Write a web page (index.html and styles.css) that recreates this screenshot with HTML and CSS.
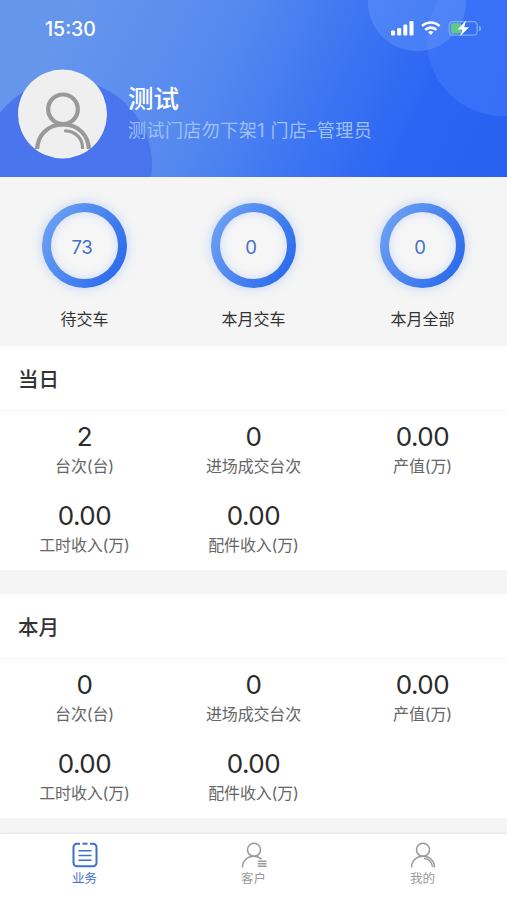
FILE: index.html
```html
<!DOCTYPE html>
<html lang="zh-CN">
<head>
    <meta charset="UTF-8">
    <meta name="viewport" content="width=device-width, initial-scale=1.0">
    <title>业务</title>
    <link rel="stylesheet" href="styles.css">
</head>
<body>

    <!-- 头部 -->
    <header class="header">
        <div class="status-bar">
            <span class="time">15:30</span>
            <svg class="status-icons" width="92" height="18" viewBox="0 0 92 18">
                <g fill="#fff">
                    <rect x="1" y="11.5" width="4" height="5" rx="1.2"/>
                    <rect x="7.2" y="9" width="4" height="7.5" rx="1.2"/>
                    <rect x="13.3" y="5.5" width="4" height="11" rx="1.2"/>
                    <rect x="19.5" y="2" width="4" height="14.5" rx="1.2"/>
                    <path d="M38.2 13a4.5 4.5 0 0 1 5.2 0L40.8 16z"/>
                </g>
                <g fill="none" stroke="#fff" stroke-width="2.6">
                    <path d="M32.1 7a12.6 12.6 0 0 1 17.4 0"/>
                    <path d="M35.2 10.9a8 8 0 0 1 11.2 0"/>
                </g>
                <rect x="59.2" y="2.6" width="28" height="13.6" rx="3.6" fill="none" stroke="#7fabf5" stroke-width="1.3"/>
                <path d="M89 6.5v6c2.8-1 2.8-5 0-6z" fill="#7fabf5"/>
                <rect x="61" y="4.3" width="10.5" height="10.2" rx="1.8" fill="#62c78b"/>
                <path d="M76 1.5l-8.3 9.1h4.8L70 17.2l9.1-9h-4.9z" fill="#fff"/>
            </svg>
        </div>
        <div class="user">
            <svg class="avatar" width="90" height="90" viewBox="0 0 90 90">
                <defs>
                    <clipPath id="avatar-clip"><path d="M0 0h90v80H0z"/></clipPath>
                </defs>
                <circle cx="45.5" cy="45" r="44.5" fill="#efefef"/>
                <g fill="none" stroke="#999" stroke-width="4.2" clip-path="url(#avatar-clip)">
                    <circle cx="46" cy="40.3" r="14.8"/>
                    <path d="M20 82c0-15 10-26.5 26-26.5S72 67 72 82"/>
                    <path d="M48.5 61.8c10 .3 17 7.5 17 17" stroke-width="3.2" stroke-linecap="round"/>
                </g>
            </svg>
            <div class="user-info">
                <h1>测试</h1>
                <p>测试门店勿下架1 门店–管理员</p>
            </div>
        </div>
    </header>

    <!-- 交车统计 -->
    <section class="summary">
        <div class="summary-item">
            <div class="ring"><span>73</span></div>
            <p>待交车</p>
        </div>
        <div class="summary-item">
            <div class="ring"><span>0</span></div>
            <p>本月交车</p>
        </div>
        <div class="summary-item">
            <div class="ring"><span>0</span></div>
            <p>本月全部</p>
        </div>
    </section>

    <!-- 当日 -->
    <section class="card">
        <h2>当日</h2>
        <div class="stats">
            <div class="stat"><strong>2</strong><span>台次(台)</span></div>
            <div class="stat"><strong>0</strong><span>进场成交台次</span></div>
            <div class="stat"><strong>0.00</strong><span>产值(万)</span></div>
            <div class="stat"><strong>0.00</strong><span>工时收入(万)</span></div>
            <div class="stat"><strong>0.00</strong><span>配件收入(万)</span></div>
        </div>
    </section>

    <!-- 本月 -->
    <section class="card">
        <h2>本月</h2>
        <div class="stats">
            <div class="stat"><strong>0</strong><span>台次(台)</span></div>
            <div class="stat"><strong>0</strong><span>进场成交台次</span></div>
            <div class="stat"><strong>0.00</strong><span>产值(万)</span></div>
            <div class="stat"><strong>0.00</strong><span>工时收入(万)</span></div>
            <div class="stat"><strong>0.00</strong><span>配件收入(万)</span></div>
        </div>
    </section>

    <!-- 底部导航 -->
    <nav class="tabbar">
        <a class="tab active">
            <svg width="28" height="28" viewBox="0 0 28 28" fill="none" stroke="currentColor" stroke-width="2">
                <path d="M9 2.7H6A3.5 3.5 0 0 0 2.5 6.2v15.6A3.5 3.5 0 0 0 6 25.3h16a3.5 3.5 0 0 0 3.5-3.5V6.2A3.5 3.5 0 0 0 22 2.7h-3"/>
                <path d="M11.5 2.7h5"/>
                <path d="M7.5 9.7h13M7.5 14.5h13M7.5 19.3h13" stroke-width="1.5"/>
            </svg>
            <span>业务</span>
        </a>
        <a class="tab">
            <svg width="28" height="28" viewBox="0 0 28 28" fill="none" stroke="currentColor" stroke-width="1.5">
                <circle cx="14" cy="8.8" r="6.5"/>
                <path d="M2.5 26.5c0-6.5 4.500-11.200 11.500-11.200 3 0 5.600 1 7.600 2.800"/>
                <path d="M17.800 20.300h8.700M17.800 22.800h8.700M17.800 25.300h8.700"/>
            </svg>
            <span>客户</span>
        </a>
        <a class="tab">
            <svg width="28" height="28" viewBox="0 0 28 28" fill="none" stroke="currentColor" stroke-width="1.5">
                <circle cx="14" cy="8.8" r="6.5"/>
                <path d="M2.5 26.5c0-6.5 4.5-11.2 11.5-11.2s11.5 4.7 11.5 11.2"/>
                <path d="M15 17.5c4.5.2 7.700 3 8.500 8.500" stroke-width="1.3"/>
            </svg>
            <span>我的</span>
        </a>
    </nav>

</body>
</html>
```
FILE: styles.css
```css
* {
    box-sizing: border-box;
    margin: 0;
    padding: 0;
}

body {
    height: 900px;
    display: flex;
    flex-direction: column;
    overflow: hidden;
    background: #f5f5f5;
    color: #333;
    font-family: Inter, "Noto Sans CJK SC", sans-serif;
}

/* 头部 */
.header {
    height: 176.5px;
    flex-shrink: 0;
    background:
        radial-gradient(circle at 67px 165px, rgba(70, 112, 238, 0.85) 84.5px, transparent 85.5px),
        radial-gradient(circle at 417px 2px, rgba(105, 155, 250, 0.42) 48.5px, transparent 49.5px),
        radial-gradient(circle at 503px 40px, rgba(80, 135, 255, 0.35) 75.5px, transparent 76.5px),
        linear-gradient(115deg, #6696ec 12%, #5589ef 42%, #3a73f2 65%, #2c65f3 80%, #2860ef 100%);
}

.status-bar {
    height: 56px;
    padding: 0 25px 0 45px;
    display: flex;
    justify-content: space-between;
    align-items: center;
}

.time {
    padding-top: 1px;
    color: #fff;
    font-size: 19.5px;
    font-weight: 500;
}

.user {
    display: flex;
    padding: 13px 0 0 17px;
}

.avatar {
    flex-shrink: 0;
}

.user-info {
    padding: 11px 0 0 21px;
}

.user-info h1 {
    color: #fff;
    font-size: 25.5px;
    font-weight: 500;
    line-height: 38px;
}

.user-info p {
    color: #9fc0f8;
    font-size: 18px;
    font-weight: 400;
    letter-spacing: 0.45px;
    line-height: 26px;
    white-space: nowrap;
}

/* 交车统计 */
.summary {
    height: 169.5px;
    flex-shrink: 0;
    display: flex;
    padding-top: 26.5px;
}

.summary-item {
    flex: 1;
    display: flex;
    flex-direction: column;
    align-items: center;
}

.ring {
    width: 85px;
    height: 85px;
    padding: 9px;
    border-radius: 50%;
    background: linear-gradient(120deg, #6ba0f3 10%, #2f6dec 85%);
    box-shadow: 0 0 12px rgba(70, 130, 240, 0.3);
}

.ring span {
    height: 67px;
    padding: 3px 5px 0 0;
    display: flex;
    align-items: center;
    justify-content: center;
    border-radius: 50%;
    background: #f6f6f7;
    box-shadow: inset 0 0 10px rgba(70, 130, 240, 0.25);
    color: #4470c4;
    font-size: 18.5px;
    letter-spacing: -0.3px;
}

.summary-item p {
    margin-top: 19px;
    font-size: 16px;
    line-height: 24px;
}

/* 数据卡片 */
.card {
    height: 224px;
    flex-shrink: 0;
    margin-bottom: 24px;
    background: #fff;
}

.card h2 {
    height: 65px;
    padding-left: 18px;
    border-bottom: 1px solid #f6f6f6;
    font-size: 20.5px;
    font-weight: 500;
    line-height: 67px;
}

.stats {
    display: grid;
    grid-template-columns: repeat(3, 1fr);
    grid-auto-rows: 79px;
    padding-top: 9px;
}

.stat {
    display: flex;
    flex-direction: column;
    align-items: center;
}

.stat strong {
    color: #2b2b2b;
    font-size: 26px;
    font-weight: 400;
    letter-spacing: -0.5px;
    line-height: 34px;
}

.stat span {
    color: #666;
    font-size: 16px;
    letter-spacing: -0.15px;
    line-height: 24px;
}

/* 底部导航 */
.tabbar {
    width: 100%;
    height: 66px;
    flex-shrink: 0;
    margin-top: -8px;
    display: flex;
    background: #fff;
    box-shadow: 0 -1px 2px rgba(0, 0, 0, 0.08);
}

.tab {
    flex: 1;
    display: flex;
    flex-direction: column;
    align-items: center;
    padding-top: 7px;
    color: #999;
    font-size: 12.5px;
    line-height: 20px;
}

.tab.active {
    color: #3d6fcd;
}
```
